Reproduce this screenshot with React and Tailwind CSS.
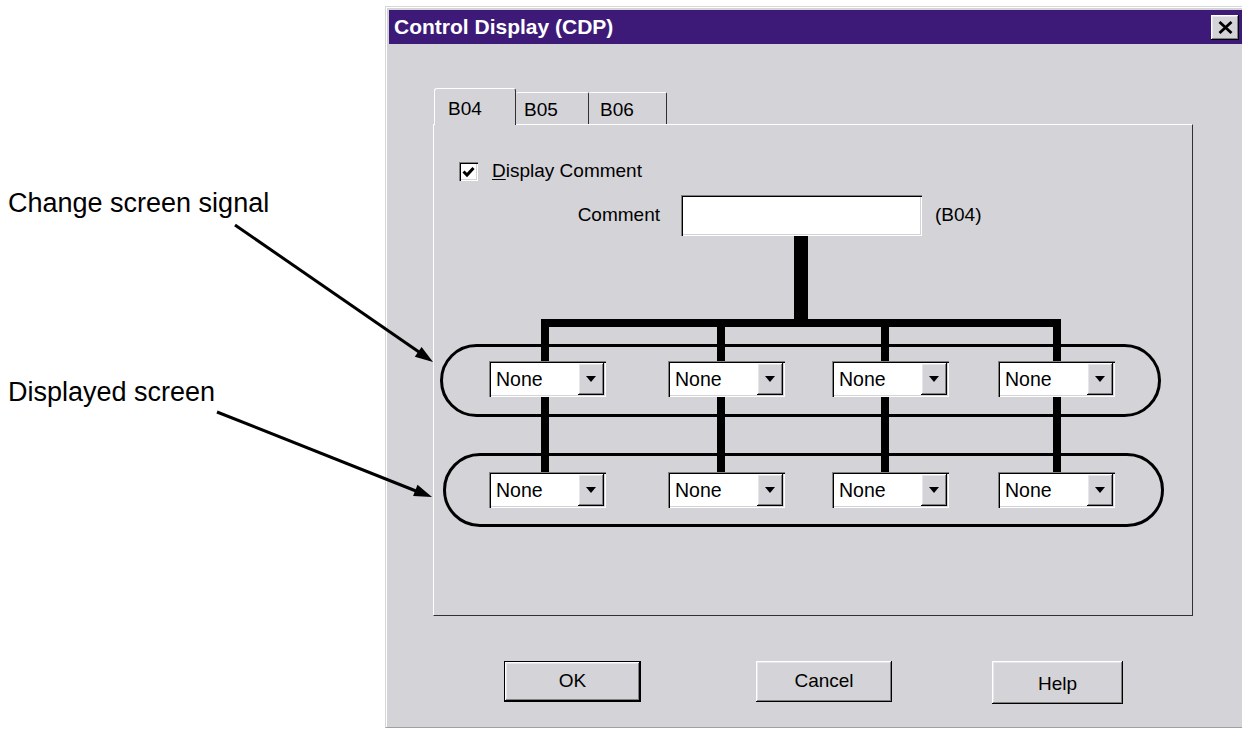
import React from "react";

// Win95-style bevels
const raised =
  "shadow-[inset_-1px_-1px_0_#000,inset_1px_1px_0_#fff,inset_-2px_-2px_0_#808080,inset_2px_2px_0_#e6e5ea]";
const sunken =
  "shadow-[inset_1px_1px_0_#808080,inset_2px_2px_0_#000,inset_-1px_-1px_0_#fff,inset_-2px_-2px_0_#d4d3d8]";

const columns = ["ml-[55px]", "ml-[62px]", "ml-[47px]", "ml-[49px]"];

const Dropdown = ({ className }) => (
  <div className={`relative z-10 flex h-[36px] w-[117px] bg-white p-[2px] ${sunken} ${className}`}>
    <span className="flex-1 pl-[5px] text-[19.5px] leading-[32px]">None</span>
    <span className={`flex w-[26px] items-center justify-center bg-[#d4d3d8] ${raised}`}>
      <svg width="10" height="6" viewBox="0 0 10 6">
        <path d="M0 0h10L5 6z" fill="#000" />
      </svg>
    </span>
  </div>
);

const Row = ({ className = "" }) => (
  <div className={`flex ${className}`}>
    {columns.map((c) => (
      <Dropdown key={c} className={c} />
    ))}
  </div>
);

const Diagram = () => (
  <svg className="absolute left-0 top-0" width="758" height="300" viewBox="0 0 758 300">
    <rect x="360" y="0" width="14" height="88" fill="#000" />
    <rect x="107" y="83" width="520" height="8" fill="#000" />
    {[107, 283, 447, 619].map((x) => (
      <rect key={x} x={x} y="83" width="8" height="160" fill="#000" />
    ))}
    <rect x="7.5" y="109.5" width="718" height="70" rx="35" fill="none" stroke="#000" strokeWidth="3" />
    <rect x="10.5" y="218.5" width="718" height="71" rx="35.5" fill="none" stroke="#000" strokeWidth="3" />
  </svg>
);

const Button = ({ children, className }) => (
  <button className={`flex items-center justify-center bg-[#d4d3d8] text-[19px] ${raised} ${className}`}>
    {children}
  </button>
);

export default function App() {
  return (
    <div className="relative flex h-[729px] w-[1242px] overflow-hidden bg-white font-['Liberation_Sans',Arial,sans-serif] text-black">
      {/* callouts */}
      <div className="w-[385px] shrink-0 pl-[8px] pt-[190px] text-[27px] leading-[27px]">
        <p>Change screen signal</p>
        <p className="mt-[162px]">Displayed screen</p>
      </div>

      {/* dialog */}
      <div className="mt-[6px] h-[722px] w-[857px] border-b border-l border-t border-b-[#a0a0a0] border-l-[#d6d6d6] border-t-[#d6d6d6]">
        <div className="flex h-full flex-col border-l border-t border-white bg-[#d4d3d8] pl-[2px] pt-[2px]">
          <div className="flex h-[34px] items-center justify-between bg-[#3d1a78] pl-[5px] pr-[3px]">
            <span className="text-[21px] font-bold text-white">Control Display (CDP)</span>
            <span className={`flex h-[25px] w-[28px] items-center justify-center bg-[#d4d3d8] ${raised}`}>
              <svg width="15" height="13" viewBox="0 0 15 13">
                <path d="M1.5 1l12 11M13.5 1l-12 11" stroke="#000" strokeWidth="2.8" />
              </svg>
            </span>
          </div>

          <div className="px-[44px] pt-[44px]">
            {/* tabs */}
            <div className="relative z-10 -mb-px flex h-[37px] items-end pl-px text-[19px]">
              <div className="flex h-[37px] w-[82px] items-start rounded-t-[3px] border-l border-r border-t border-l-white border-r-[#303030] border-t-white bg-[#d4d3d8] pl-[13px] pt-[6px]">
                B04
              </div>
              <div className="mb-px flex h-[32px] w-[73px] items-center rounded-t-[2px] border-r border-t border-r-[#303030] border-t-white pl-[8px] pt-[4px]">
                B05
              </div>
              <div className="mb-px flex h-[32px] w-[78px] items-center rounded-t-[2px] border-r border-t border-r-[#303030] border-t-white pl-[11px] pt-[4px]">
                B06
              </div>
            </div>

            {/* panel */}
            <div className="h-[492px] w-[760px] border border-b-[#303030] border-l-white border-r-[#303030] border-t-white text-[19px]">
              <div className="mt-[37px] flex h-[19px] items-center pl-[25px]">
                <span className={`flex h-[19px] w-[19px] items-center justify-center bg-white ${sunken}`}>
                  <svg width="13" height="12" viewBox="0 0 13 12">
                    <path d="M1.5 5.5l3.5 3.5L11.5 2" fill="none" stroke="#000" strokeWidth="3" />
                  </svg>
                </span>
                <span className="ml-[14px]">
                  <span className="underline underline-offset-2">D</span>isplay Comment
                </span>
              </div>

              <div className="mt-[14px] flex h-[41px] items-center">
                <span className="w-[226px] text-right">Comment</span>
                <span className={`ml-[21px] h-[41px] w-[241px] bg-white ${sunken}`} />
                <span className="ml-[13px]">(B04)</span>
              </div>

              <div className="relative h-[300px]">
                <Diagram />
                <Row className="pt-[125px]" />
                <Row className="mt-[75px]" />
              </div>
            </div>

            {/* buttons */}
            <div className="mt-[45px] flex items-start">
              <Button className="ml-[71px] h-[41px] w-[137px] border border-black">OK</Button>
              <Button className="ml-[115px] h-[41px] w-[136px]">Cancel</Button>
              <Button className="ml-[100px] h-[43px] w-[131px] pt-[3px]">Help</Button>
            </div>
          </div>
        </div>
      </div>

      {/* arrows */}
      <svg className="pointer-events-none absolute left-0 top-0" width="1242" height="729" viewBox="0 0 1242 729">
        <line x1="235" y1="225" x2="419" y2="352" stroke="#000" strokeWidth="3" />
        <path d="M433 362L414.8 356.7L421.6 346.9z" fill="#000" />
        <line x1="217" y1="412" x2="416" y2="491" stroke="#000" strokeWidth="3" />
        <path d="M432 497L413.1 496L417.5 484.8z" fill="#000" />
      </svg>
    </div>
  );
}
